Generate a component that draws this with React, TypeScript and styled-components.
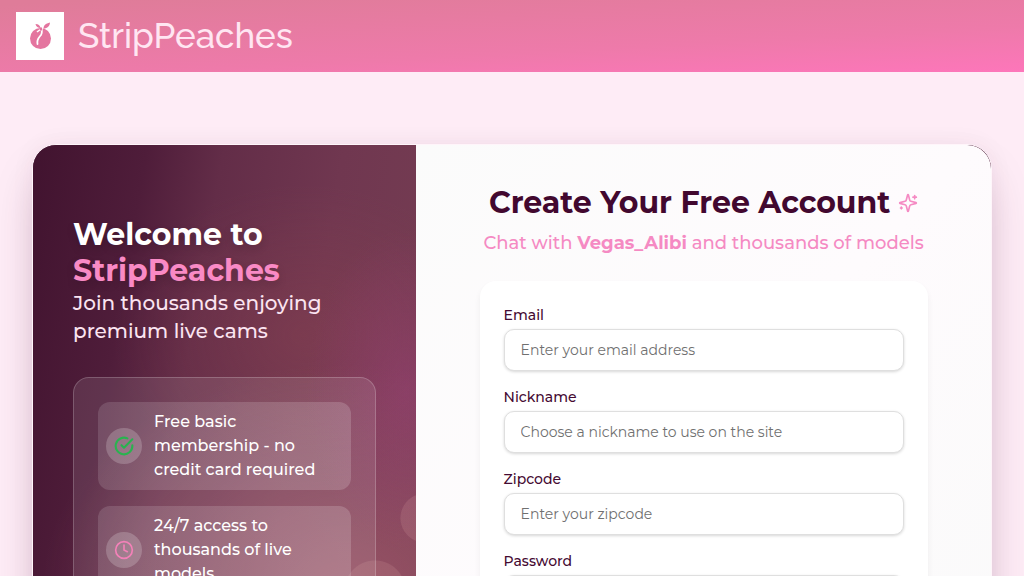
import React from "react";
import styled, { createGlobalStyle } from "styled-components";

const GlobalStyle = createGlobalStyle`
  *, *::before, *::after { box-sizing: border-box; }
  html { scrollbar-width: none; }
  body {
    margin: 0;
    background: #feecf6;
    font-family: Montserrat, Inter, sans-serif;
    color: #450a32;
  }
  h1, h2, p, ul { margin: 0; padding: 0; }
`;

const Header = styled.header`
  display: flex;
  align-items: center;
  height: 72px;
  padding: 0 16px;
  background: linear-gradient(177deg, #df7c99 4%, #ee7aaa 64%, #fd76ba 100%);
`;

const Brand = styled.a`
  display: flex;
  align-items: center;
  gap: 14px;
  color: #ffe6f2;
  font-family: Raleway, Lato, sans-serif;
  font-size: 35px;
  font-weight: 500;
  line-height: 48px;
  text-decoration: none;
`;

const Main = styled.main`
  padding: 72px 32px;
`;

const Card = styled.section`
  display: grid;
  grid-template-columns: 2fr 3fr;
  border: 1px solid #fff5fa;
  border-radius: 24px;
  overflow: hidden;
  background: #6b4058;
  box-shadow: 0 24px 48px -12px rgba(69, 10, 50, 0.28), 0 0 24px rgba(69, 10, 50, 0.05);
`;

const Welcome = styled.div`
  padding: 72px 40px;
  background:
    radial-gradient(circle at 392px 373px, rgba(205, 145, 150, 0.22) 24px, transparent 25px),
    radial-gradient(circle at 342px 446px, rgba(205, 145, 150, 0.22) 30px, transparent 31px),
    radial-gradient(ellipse 100px 160px at 373px 245px, rgba(160, 65, 125, 0.45), transparent),
    radial-gradient(ellipse 300px 220px at 310px 440px, rgba(185, 105, 120, 0.5), transparent),
    radial-gradient(ellipse 190px 150px at 270px 190px, rgba(150, 70, 80, 0.3), transparent),
    linear-gradient(100deg, #41132f 0%, #4f1d3a 24%, #632d48 40%, #703750 65%, #763e53 100%);
`;

const WelcomeTitle = styled.h1`
  color: #fff;
  font-size: 30px;
  font-weight: 700;
  line-height: 36px;
  text-shadow: 0 4px 8px rgba(0, 0, 0, 0.15);
`;

const BrandName = styled.span`
  display: block;
  color: #f98ac5;
`;

const Tagline = styled.p`
  max-width: 264px;
  color: #fbe4f1;
  font-size: 20px;
  font-weight: 500;
  line-height: 28px;
`;

const Features = styled.ul`
  display: grid;
  gap: 16px;
  margin-top: 32px;
  padding: 24px;
  border: 1px solid rgba(255, 255, 255, 0.2);
  border-radius: 16px;
  background: rgba(255, 255, 255, 0.1);
  list-style: none;
`;

const Feature = styled.li`
  display: flex;
  align-items: center;
  gap: 12px;
  padding: 8px;
  border-radius: 12px;
  background: linear-gradient(90deg, rgba(255, 255, 255, 0.13), rgba(255, 255, 255, 0.17));
  color: #fff;
  font-size: 16px;
  font-weight: 500;
  line-height: 24px;
`;

const FeatureText = styled.span`
  max-width: 168px;
`;

const FeatureIcon = styled.span<{ $color: string }>`
  display: grid;
  place-items: center;
  flex: none;
  width: 36px;
  height: 36px;
  border-radius: 50%;
  background: rgba(255, 255, 255, 0.2);
  color: ${(p) => p.$color};
`;

const SignUp = styled.div`
  padding: 40px 24px 48px;
  border-radius: 0 24px 24px 0;
  background: linear-gradient(135deg, #fbfbfb, #fefbfd 50%, #fafafa);
`;

const Heading = styled.h2`
  display: flex;
  align-items: center;
  justify-content: center;
  gap: 8px;
  color: #42082f;
  font-size: 30px;
  font-weight: 700;
  line-height: 36px;
  white-space: nowrap;
`;

const Subheading = styled.p`
  margin-top: 8px;
  color: #f58ac3;
  font-size: 18px;
  font-weight: 500;
  line-height: 28px;
  text-align: center;
  white-space: nowrap;
`;

const Form = styled.form`
  display: grid;
  gap: 16px;
  max-width: 448px;
  margin: 24px auto 0;
  padding: 24px;
  border-radius: 16px;
  background: #fff;
  box-shadow: 0 4px 6px rgba(0, 0, 0, 0.06);
`;

const Field = styled.div`
  display: grid;
  gap: 4px;
`;

const Label = styled.label`
  color: #450a32;
  font-size: 14px;
  font-weight: 500;
  line-height: 20px;
`;

const Input = styled.input`
  width: 100%;
  height: 42px;
  padding: 0 16px;
  border: 1px solid #dfdfdf;
  border-radius: 10px;
  background: #fff;
  box-shadow: 0 1px 3px rgba(0, 0, 0, 0.16);
  font: inherit;
  font-size: 14px;
  &::placeholder { color: #707070; opacity: 1; }
`;

const StrokeIcon = styled.svg.attrs({ viewBox: "0 0 24 24", "aria-hidden": true })`
  width: 20px;
  height: 20px;
  fill: none;
  stroke: currentColor;
  stroke-linecap: round;
  stroke-linejoin: round;
`;

const SparkleIcon = styled(StrokeIcon)`
  color: #f58ac3;
`;

const PeachMark = () => (
  <svg width="48" height="48" viewBox="0 0 48 48" aria-hidden="true">
    <path fill="#fff" d="M0 0h48v48H0z" />
    <circle cx="24.500" cy="26.500" r="10.500" fill="#e4759f" />
    <path d="M26 16c-1 3 1 4-1 7-2 2.500-4.500 4-3.500 9" fill="none" stroke="#fff" strokeWidth="1.800" strokeLinecap="round" />
    <path d="M21 20c1.500-1.500 3-2.500 5-2.500" fill="none" stroke="#fff" strokeWidth="1.500" />
    <g fill="#e4759f">
      <path d="M27.500 16.500c0-3 2-5 6.500-6-.3 3.500-2.500 6-6.500 6z" />
      <path d="M24.500 16c-.5-2.500-2-4-5-4 .5 2.500 2.500 4 5 4z" />
      <path d="M24 15.500h2v3h-2z" />
    </g>
  </svg>
);

const fields = [
  { id: "email", label: "Email", type: "email", placeholder: "Enter your email address" },
  { id: "nickname", label: "Nickname", type: "text", placeholder: "Choose a nickname to use on the site" },
  { id: "zipcode", label: "Zipcode", type: "text", placeholder: "Enter your zipcode" },
  { id: "password", label: "Password", type: "password", placeholder: "" },
];

export default function App() {
  return (
    <>
      <GlobalStyle />
      <Header>
        <Brand href="/">
          <PeachMark />
          StripPeaches
        </Brand>
      </Header>
      <Main>
        <Card>
          <Welcome>
            <WelcomeTitle>
              Welcome to <BrandName>StripPeaches</BrandName>
            </WelcomeTitle>
            <Tagline>Join thousands enjoying premium live cams</Tagline>
            <Features>
              <Feature>
                <FeatureIcon $color="#29b34f">
                  <StrokeIcon strokeWidth="2.5">
                    <path d="M22 11.080V12a10 10 0 1 1-5.930-9.140" />
                    <path d="m9 11 3 3L22 4" />
                  </StrokeIcon>
                </FeatureIcon>
                <FeatureText>Free basic membership - no credit card required</FeatureText>
              </Feature>
              <Feature>
                <FeatureIcon $color="#f381b8">
                  <StrokeIcon strokeWidth="2">
                    <circle cx="12" cy="12" r="10" />
                    <path d="M12 6v6l4 2" />
                  </StrokeIcon>
                </FeatureIcon>
                <FeatureText>24/7 access to thousands of live models</FeatureText>
              </Feature>
            </Features>
          </Welcome>
          <SignUp>
            <Heading>
              Create Your Free Account
              <SparkleIcon strokeWidth="2">
                <path d="M9.937 15.500A2 2 0 0 0 8.500 14.063l-6.135-1.582a.5.5 0 0 1 0-.962L8.500 9.936A2 2 0 0 0 9.937 8.500l1.582-6.135a.5.5 0 0 1 .963 0L14.063 8.500A2 2 0 0 0 15.500 9.937l6.135 1.581a.5.5 0 0 1 0 .964L15.500 14.063a2 2 0 0 0-1.437 1.437l-1.582 6.135a.5.5 0 0 1-.963 0z" />
                <path d="M20 3v4M22 5h-4M4 17v2M5 18H3" />
              </SparkleIcon>
            </Heading>
            <Subheading>
              Chat with <strong>Vegas_Alibi</strong> and thousands of models
            </Subheading>
            <Form>
              {fields.map((f) => (
                <Field key={f.id}>
                  <Label htmlFor={f.id}>{f.label}</Label>
                  <Input id={f.id} type={f.type} placeholder={f.placeholder} />
                </Field>
              ))}
            </Form>
          </SignUp>
        </Card>
      </Main>
    </>
  );
}
